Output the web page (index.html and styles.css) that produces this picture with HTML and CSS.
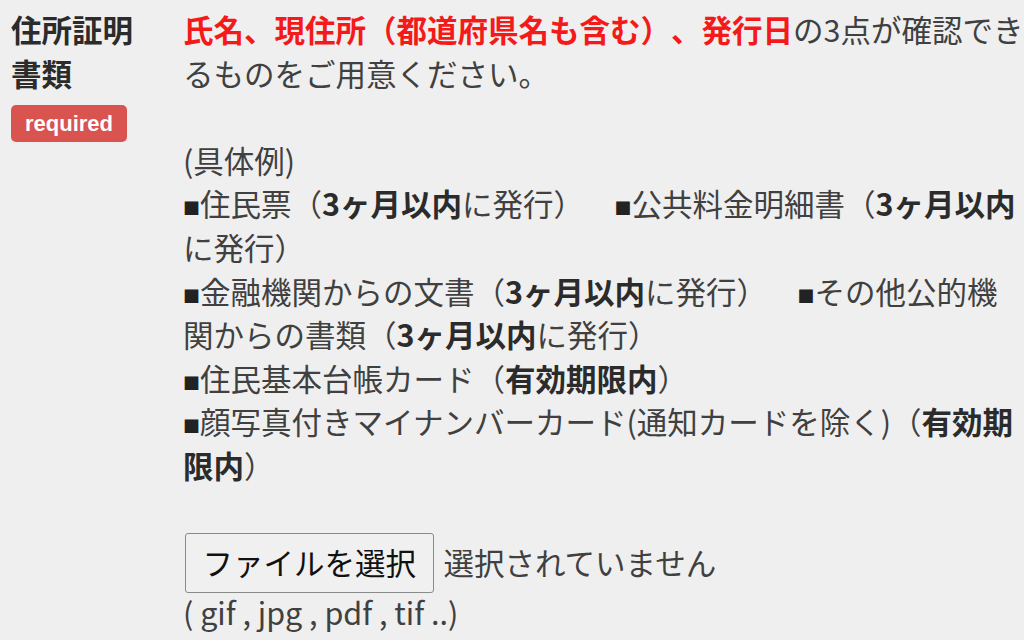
FILE: index.html
```html
<!DOCTYPE html>
<html lang="ja">
<head>
<meta charset="utf-8">
<title>住所証明書類</title>
<link rel="stylesheet" href="styles.css">
</head>
<body>
<div class="form-row">
  <div class="label">
    <span class="label-text">住所証明書類</span>
    <span class="badge">required</span>
  </div>
  <div class="field">
    <p class="lead"><strong class="em-red">氏名、現住所（都道府県名も含む）、発行日</strong>の3点が確認できるものをご用意ください。</p>
    <p class="examples">(具体例)<br><span class="sq">■</span>住民票（<b>3ヶ月以内</b>に発行）　<span class="sq">■</span>公共料金明細書（<b>3ヶ月以内</b>に発行）<br><span class="sq">■</span>金融機関からの文書（<b>3ヶ月以内</b>に発行）　<span class="sq">■</span>その他公的機関からの書類（<b>3ヶ月以内</b>に発行）<br><span class="sq">■</span>住民基本台帳カード（<b>有効期限内</b>）<br><span class="sq">■</span>顔写真付きマイナンバーカード(通知カードを除く)（<b>有効期限内</b>）</p>
    <div class="file">
      <span class="file-btn">ファイルを選択</span>
      <span class="file-status">選択されていません</span>
    </div>
    <p class="types">( gif , jpg , pdf , tif ..)</p>
  </div>
</div>
</body>
</html>
```

FILE: styles.css
```css
html, body {
  margin: 0;
  background: #efefef;
  overflow: hidden;
}
body {
  font-family: "Noto Sans CJK JP", sans-serif;
  font-size: 30.5px;
  line-height: 43.6px;
  color: #404040;
  text-spacing-trim: space-all;
}
p { margin: 0; }
.form-row {
  display: flex;
  gap: 42px;
  padding: 8px 0 0 11px;
}
.label {
  flex: none;
  width: 130px;
  display: flex;
  flex-direction: column;
  align-items: flex-start;
  font-weight: bold;
  color: #2b2b2b;
}
.badge {
  margin-top: 10px;
  background: #d9534f;
  color: #fff;
  font-family: "Liberation Sans", Arial, sans-serif;
  font-size: 22px;
  line-height: 37px;
  padding: 0 14px;
  border-radius: 5px;
  font-weight: bold;
}
.field {
  flex: none;
  width: 841px;
}
.em-red { color: #f41a1a; }
.examples { margin-top: 43.6px; }
.examples b { color: #2b2b2b; }
.sq {
  font-size: 17px;
  line-height: 1;
  color: #222;
  vertical-align: 1px;
}
.file {
  display: flex;
  align-items: center;
  margin-top: 45px;
}
.file-btn {
  box-sizing: border-box;
  height: 60px;
  display: flex;
  align-items: center;
  margin-left: 2px;
  padding: 0 16.5px;
  border: 1px solid #8a8a8a;
  border-radius: 3px;
  background: #f0f0f0;
  color: #111;
}
.file-status { margin-left: 10px; }
.types { margin-top: -2px; }
```
